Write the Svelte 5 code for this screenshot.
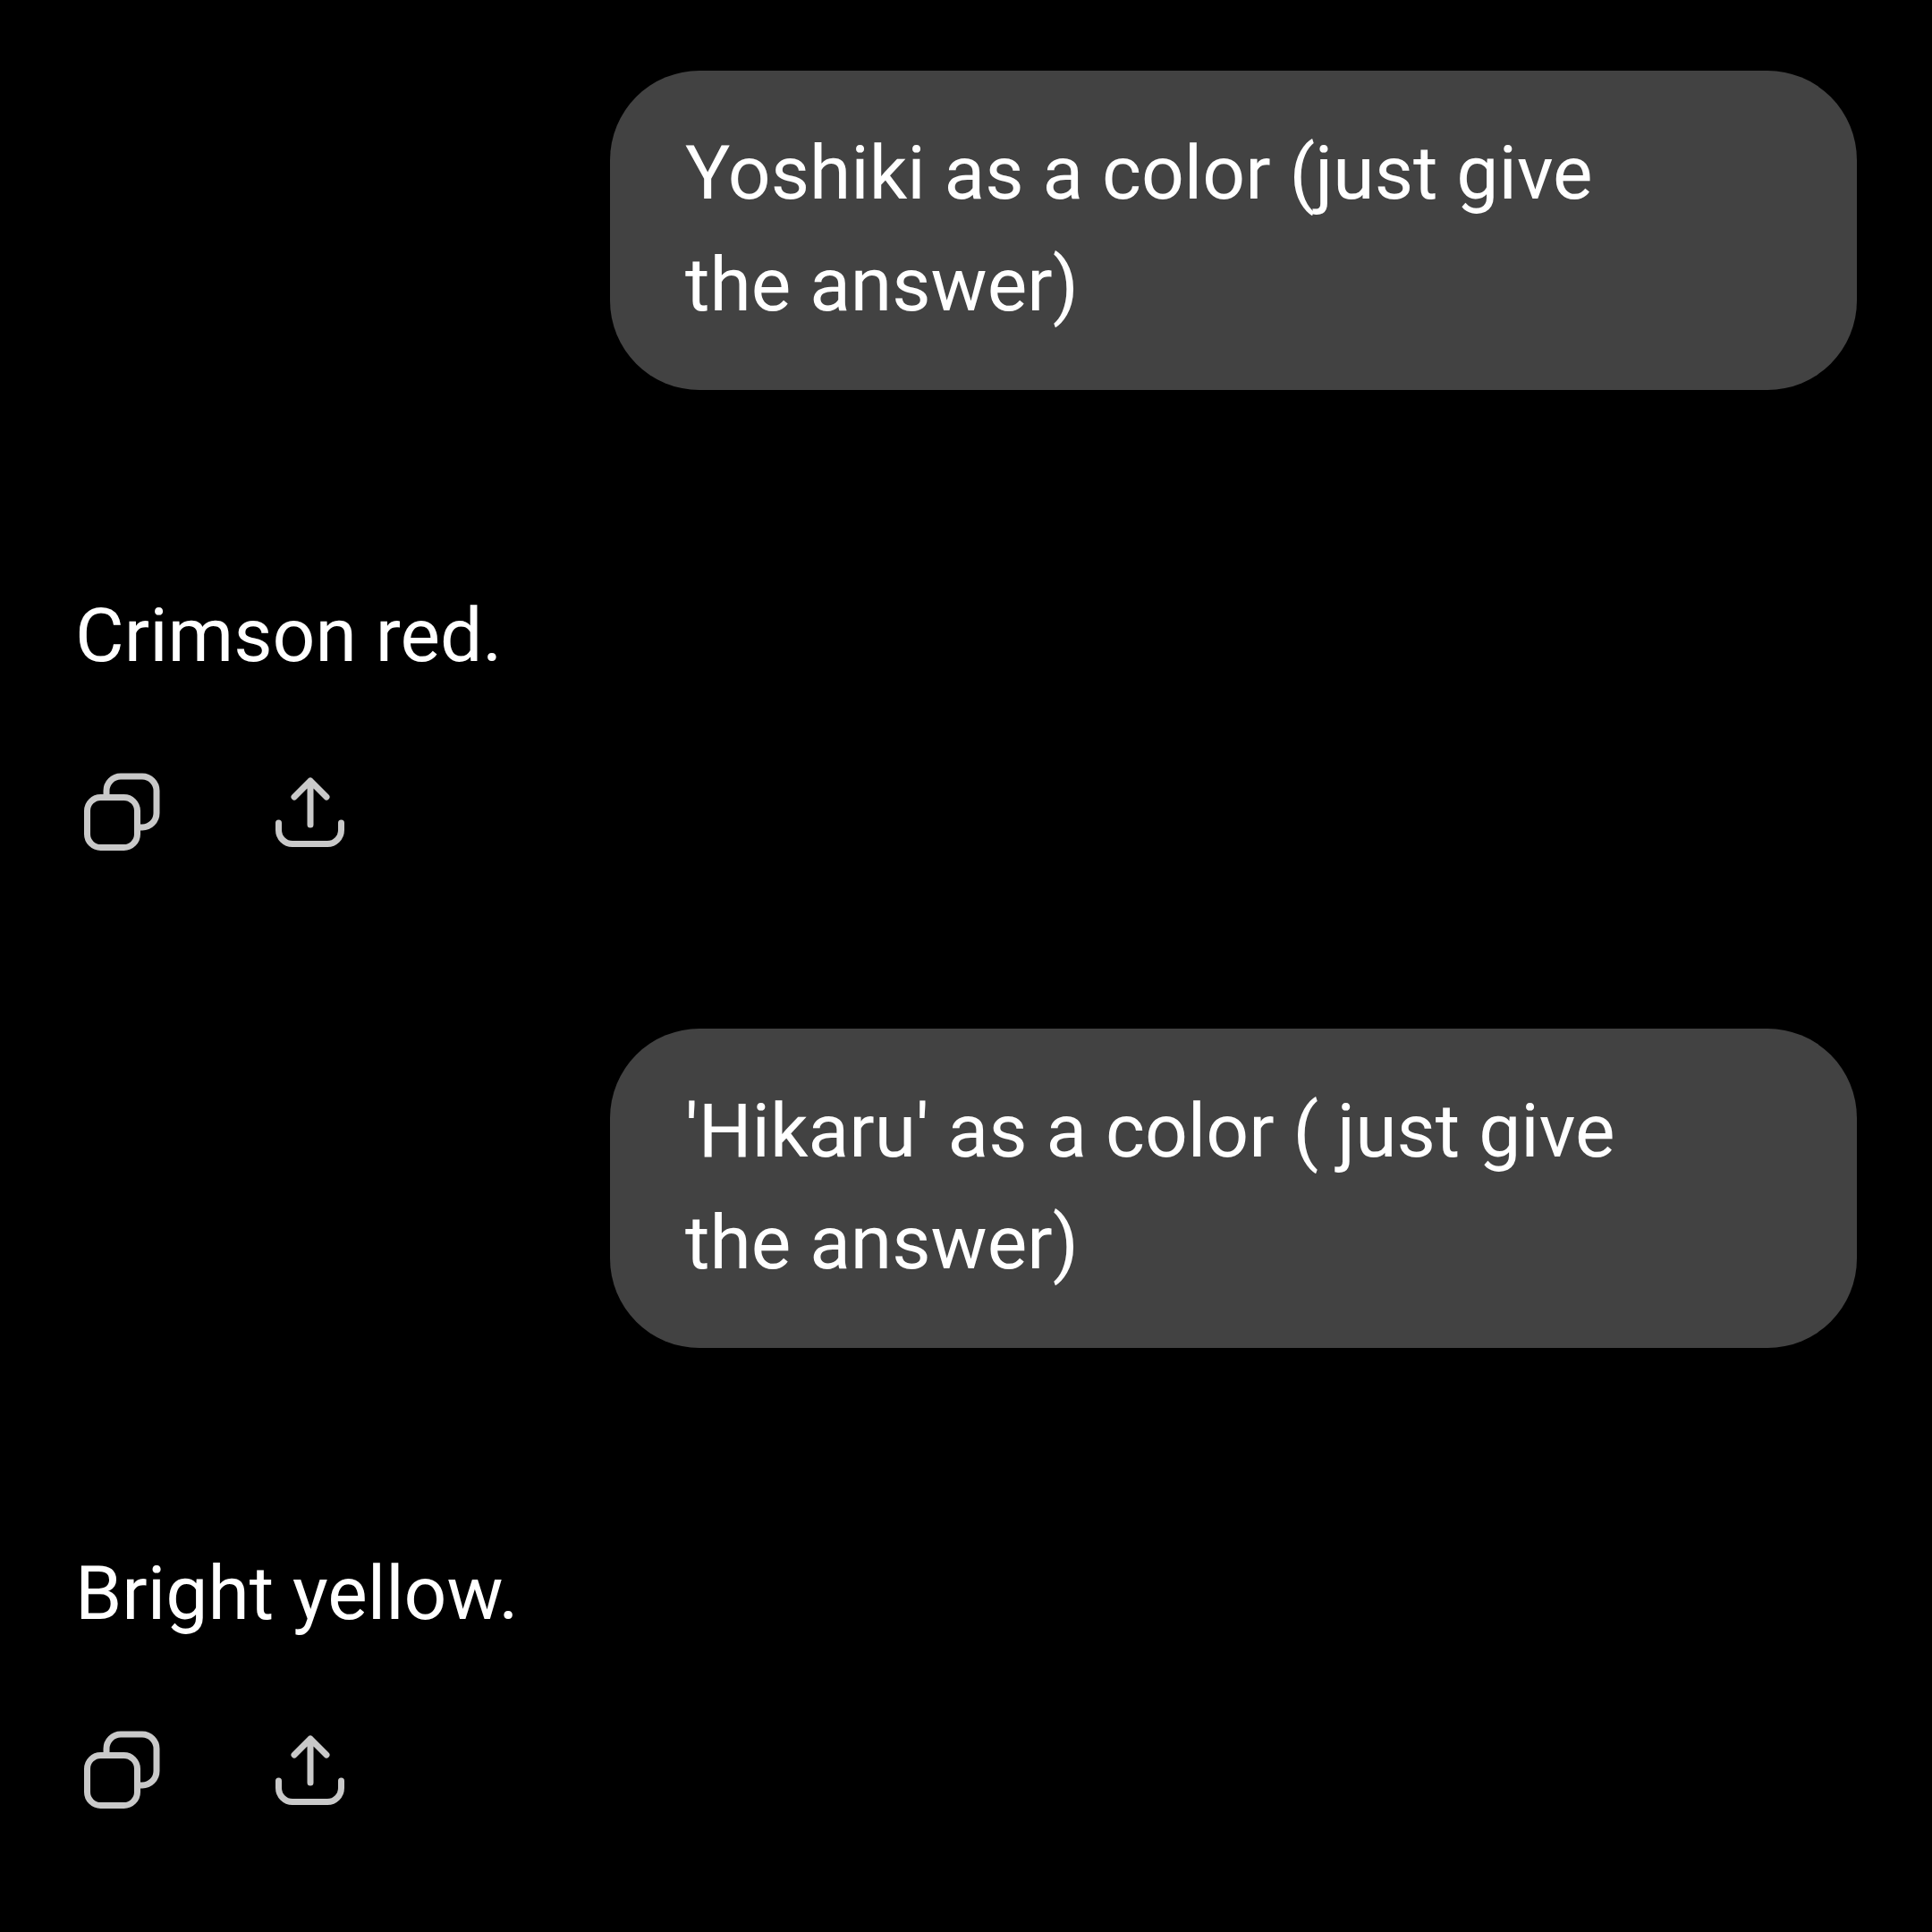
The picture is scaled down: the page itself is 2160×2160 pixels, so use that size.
<script>
    const turns = [
        { question: "Yoshiki as a color (just give the answer)", answer: "Crimson red." },
        { question: "'Hikaru' as a color ( just give the answer)", answer: "Bright yellow." }
    ];
</script>

<main>
    {#each turns as turn}
        <div class="bubble">{turn.question}</div>
        <p class="answer">{turn.answer}</p>
        <div class="actions">
            <svg viewBox="85 858 100 100" aria-label="Copy">
                <rect x="98.5" y="891.5" width="56" height="56" rx="15" />
                <path d="M120 888v-4a16 16 0 0 1 16-16h24a16 16 0 0 1 16 16v25a16 16 0 0 1-16 16h-3" />
            </svg>
            <svg viewBox="297 858 100 100" aria-label="Share">
                <path d="M347 922V873M329 891l18-18 18 18" />
                <path d="M311.5 920v8a15.500 15.500 0 0 0 15.500 15.500h39a15.500 15.500 0 0 0 15.500-15.500v-8" />
            </svg>
        </div>
    {/each}
</main>

<style>
    :global(body) {
        background: #000;
    }

    main {
        width: 2160px;
        height: 2160px;
        box-sizing: border-box;
        padding: 79px 84px 0;
        background: #000;
        font-family: Roboto, sans-serif;
        font-size: 84px;
        line-height: 125px;
        color: #fff;
    }

    .bubble {
        width: 1394px;
        box-sizing: border-box;
        margin-left: auto;
        padding: 52px 200px 55px 84px;
        border-radius: 100px;
        background: #424242;
    }

    .answer {
        margin: 212px 0 85px;
    }

    .actions {
        display: flex;
        gap: 113px;
        margin-bottom: 192px;
    }

    svg {
        width: 100px;
        height: 100px;
        fill: none;
        stroke: #c9c9c9;
        stroke-width: 7;
        stroke-linecap: round;
        stroke-linejoin: round;
    }
</style>
